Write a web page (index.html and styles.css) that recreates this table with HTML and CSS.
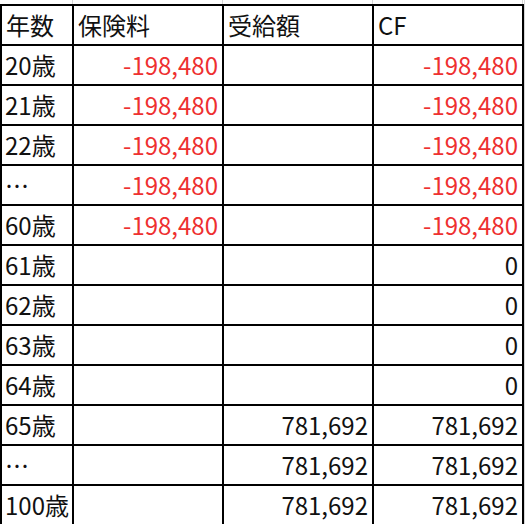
FILE: index.html
```html
<!DOCTYPE html>
<html lang="ja">
<head>
<meta charset="utf-8">
<link rel="stylesheet" href="styles.css">
</head>
<body>
<div class="sheet">
  <div class="gridtop">
    <span class="g1"></span><span class="g2"></span><span class="g2"></span><span class="g2"></span>
  </div>
  <table class="cf">
    <colgroup><col class="c1"><col class="c2"><col class="c2"><col class="c2"></colgroup>
    <thead>
      <tr><th>年数</th><th>保険料</th><th>受給額</th><th>CF</th></tr>
    </thead>
    <tbody>
      <tr><td>20歳</td><td class="num neg">-198,480</td><td class="num"></td><td class="num neg">-198,480</td></tr>
      <tr><td>21歳</td><td class="num neg">-198,480</td><td class="num"></td><td class="num neg">-198,480</td></tr>
      <tr><td>22歳</td><td class="num neg">-198,480</td><td class="num"></td><td class="num neg">-198,480</td></tr>
      <tr><td>…</td><td class="num neg">-198,480</td><td class="num"></td><td class="num neg">-198,480</td></tr>
      <tr><td>60歳</td><td class="num neg">-198,480</td><td class="num"></td><td class="num neg">-198,480</td></tr>
      <tr><td>61歳</td><td class="num"></td><td class="num"></td><td class="num">0</td></tr>
      <tr><td>62歳</td><td class="num"></td><td class="num"></td><td class="num">0</td></tr>
      <tr><td>63歳</td><td class="num"></td><td class="num"></td><td class="num">0</td></tr>
      <tr><td>64歳</td><td class="num"></td><td class="num"></td><td class="num">0</td></tr>
      <tr><td>65歳</td><td class="num"></td><td class="num">781,692</td><td class="num">781,692</td></tr>
      <tr><td>…</td><td class="num"></td><td class="num">781,692</td><td class="num">781,692</td></tr>
      <tr><td>100歳</td><td class="num"></td><td class="num">781,692</td><td class="num">781,692</td></tr>
    </tbody>
  </table>
</div>
</body>
</html>
```

FILE: styles.css
```css
html, body {
  margin: 0;
  padding: 0;
  background: #ffffff;
}
body {
  font-family: "Noto Sans CJK JP", "Noto Sans", sans-serif;
  font-size: 24px;
  color: #111111;
}
.sheet {
  width: 524px;
  border-right: 1px solid #d6d6d6;
  overflow: hidden;
  height: 524px;
}
.gridtop {
  display: flex;
  height: 4px;
}
.gridtop span {
  display: block;
  height: 4px;
  border-right: 1px solid #d6d6d6;
}
.gridtop .g1 { width: 72px; }
.gridtop .g2 { width: 149px; }
.cf {
  border-collapse: separate;
  border-spacing: 0;
  table-layout: fixed;
  width: 524px;
  border-top: 2px solid #000;
  border-left: 2px solid #000;
}
.c1 { width: 72px; }
.c2 { width: 150px; }
.cf th, .cf td {
  height: 38px;
  padding: 0 4px 0 3px;
  border-right: 2px solid #000;
  border-bottom: 2px solid #000;
  font-weight: normal;
  text-align: left;
  vertical-align: middle;
  white-space: nowrap;
  overflow: hidden;
  line-height: 34px;
}
.cf th { padding-left: 4px; }
.cf .num { text-align: right; }
.cf .neg { color: #ee3030; }
```
